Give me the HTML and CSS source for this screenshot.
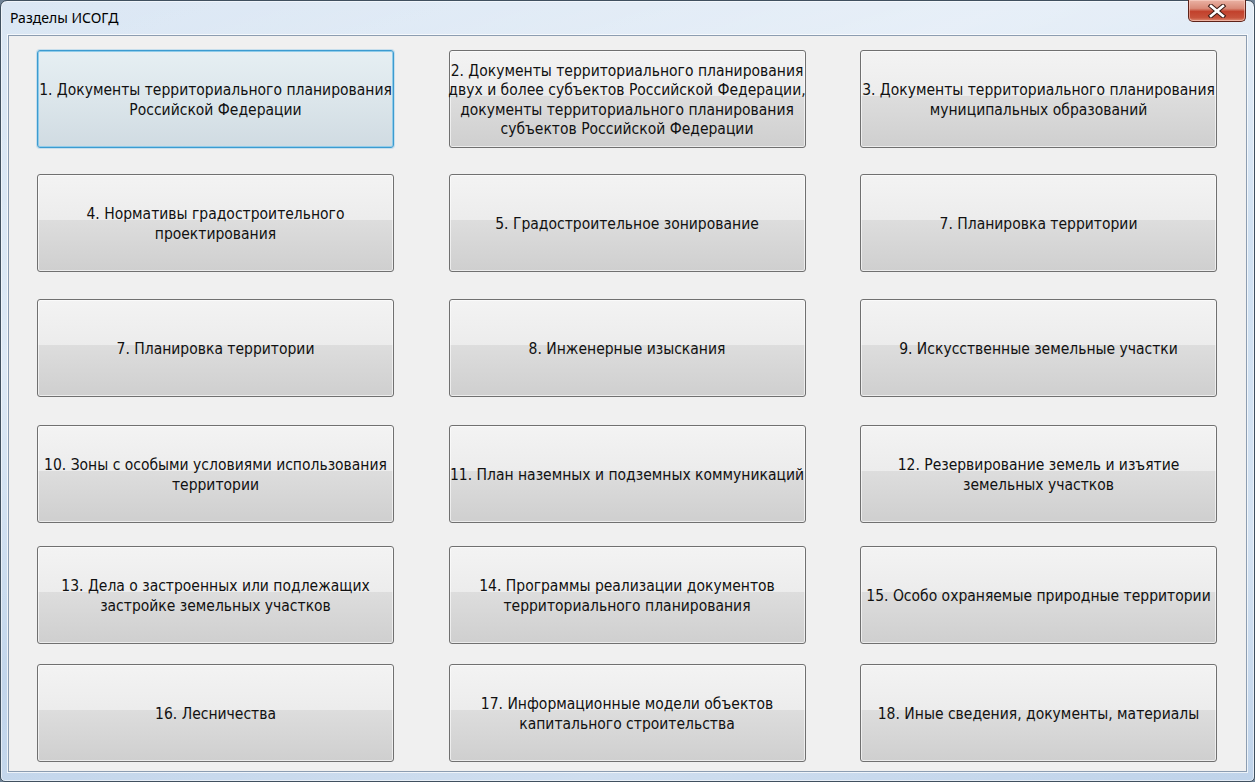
FILE: index.html
```html
<!DOCTYPE html>
<html lang="ru">
<head>
<meta charset="utf-8">
<title>Разделы ИСОГД</title>
<link rel="stylesheet" href="styles.css">
</head>
<body>
<div class="window">
  <div class="titlebar">
    <div class="title">Разделы ИСОГД</div>
    <div class="close" aria-label="Закрыть">
      <svg width="20" height="14" viewBox="0 0 20 14">
        <path d="M4 2 L16 12 M16 2 L4 12" stroke="#3b1a14" stroke-width="4.6" stroke-linecap="square" fill="none"/>
        <path d="M4 2 L16 12 M16 2 L4 12" stroke="#ffffff" stroke-width="2.6" stroke-linecap="square" fill="none"/>
      </svg>
    </div>
  </div>
  <div class="client">
    <div class="row r1">
      <div class="btn focused">1. Документы территориального планирования<br>Российской Федерации</div>
      <div class="btn">2. Документы территориального планирования<br>двух и более субъектов Российской Федерации,<br>документы территориального планирования<br>субъектов Российской Федерации</div>
      <div class="btn">3. Документы территориального планирования<br>муниципальных образований</div>
    </div>
    <div class="row r2">
      <div class="btn">4. Нормативы градостроительного<br>проектирования</div>
      <div class="btn">5. Градостроительное зонирование</div>
      <div class="btn">7. Планировка территории</div>
    </div>
    <div class="row r3">
      <div class="btn">7. Планировка территории</div>
      <div class="btn">8. Инженерные изыскания</div>
      <div class="btn">9. Искусственные земельные участки</div>
    </div>
    <div class="row r4">
      <div class="btn">10. Зоны с особыми условиями использования<br>территории</div>
      <div class="btn">11. План наземных и подземных коммуникаций</div>
      <div class="btn">12. Резервирование земель и изъятие<br>земельных участков</div>
    </div>
    <div class="row r5">
      <div class="btn">13. Дела о застроенных или подлежащих<br>застройке земельных участков</div>
      <div class="btn">14. Программы реализации документов<br>территориального планирования</div>
      <div class="btn">15. Особо охраняемые природные территории</div>
    </div>
    <div class="row r6">
      <div class="btn">16. Лесничества</div>
      <div class="btn">17. Информационные модели объектов<br>капитального строительства</div>
      <div class="btn">18. Иные сведения, документы, материалы</div>
    </div>
  </div>
</div>
</body>
</html>
```

FILE: styles.css
```css
html, body {
  margin: 0;
  padding: 0;
}
body {
  width: 1255px;
  height: 782px;
  overflow: hidden;
  background: #6f8296;
  font-family: "DejaVu Sans Condensed", "DejaVu Sans", sans-serif;
}
.window {
  box-sizing: border-box;
  width: 1255px;
  height: 782px;
  border: 1px solid #40505f;
  border-radius: 7px 7px 5px 5px;
  background:
    linear-gradient(160deg, rgba(255,255,255,0) 0%, rgba(255,255,255,0.35) 30%, rgba(255,255,255,0) 55%, rgba(255,255,255,0.25) 80%, rgba(255,255,255,0) 100%),
    linear-gradient(180deg, #dbe7f4 0%, #cddff1 40%, #bfd3ea 100%);
  display: flex;
  flex-direction: column;
  box-shadow: inset 0 0 0 1px rgba(255,255,255,0.55);
}
.titlebar {
  height: 34px;
  display: flex;
  align-items: flex-start;
  justify-content: space-between;
  flex: none;
}
.title {
  font-family: "Noto Sans", "DejaVu Sans", sans-serif;
  font-size: 14px;
  color: #000;
  padding: 8px 0 0 9px;
  line-height: 18px;
}
.close {
  width: 58px;
  height: 22px;
  margin: -1px 8px 0 0;
  box-sizing: border-box;
  border: 1px solid #5d2219;
  border-top: none;
  border-radius: 0 0 5px 5px;
  background: linear-gradient(180deg, #eab2a4 0%, #d98a78 40%, #c2412c 55%, #c7533c 85%, #e09078 100%);
  box-shadow: inset 0 0 0 1px rgba(255,220,210,0.5);
  display: flex;
  align-items: center;
  justify-content: center;
}
.close svg {
  display: block;
}
.client {
  flex: 1;
  margin: 0 7px 9px 7px;
  background: #f0f0f0;
  border: 1px solid #8c9db1;
  box-shadow: 0 0 0 1px rgba(255,255,255,0.7);
  padding: 14px 29px 0 28px;
  display: flex;
  flex-direction: column;
}
.row {
  display: flex;
  justify-content: space-between;
  height: 98px;
  flex: none;
}
.r2 { margin-top: 26px; }
.r3 { margin-top: 27px; }
.r4 { margin-top: 28px; }
.r5 { margin-top: 23px; }
.r6 { margin-top: 20px; }
.btn {
  box-sizing: border-box;
  width: 357px;
  height: 98px;
  padding-top: 3px;
  border: 1px solid #707070;
  border-radius: 3px;
  background: linear-gradient(180deg, #f3f3f3 0%, #ececec 47%, #dddddd 47%, #cfcfcf 100%);
  box-shadow: inset 0 0 0 1px rgba(255,255,255,0.6);
  display: flex;
  align-items: center;
  justify-content: center;
  text-align: center;
  white-space: nowrap;
  font-size: 15.5px;
  line-height: 19.5px;
  color: #111;
}
.btn.focused {
  border: 1px solid #3c9bd0;
  background: linear-gradient(180deg, #e6eff3 0%, #dce6eb 50%, #d0dbe2 100%);
  box-shadow: inset 0 0 0 1px #8fcbe9, 0 0 0 1px rgba(120,190,230,0.35);
}
```
